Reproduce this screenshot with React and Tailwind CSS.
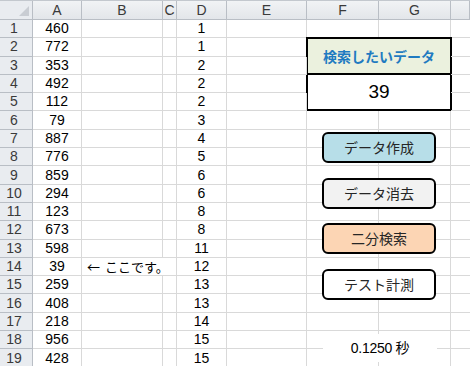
import React from 'react'

const colA = [460, 772, 353, 492, 112, 79, 887, 776, 859, 294, 123, 673, 598, 39, 259, 408, 218, 956, 428]
const colD = [1, 1, 2, 2, 2, 3, 4, 5, 6, 6, 8, 8, 11, 12, 13, 13, 14, 15, 15]
const letters = ['A', 'B', 'C', 'D', 'E', 'F', 'G', '']

const buttons = [
  { label: 'データ作成', top: 'top-[132px]', bg: 'bg-[#b7dee8]' },
  { label: 'データ消去', top: 'top-[178px]', bg: 'bg-[#f2f2f2]' },
  { label: '二分検索', top: 'top-[223px]', bg: 'bg-[#fcd5b4]' },
  { label: 'テスト計測', top: 'top-[269px]', bg: 'bg-white' },
]

const font = { fontFamily: '"Liberation Sans", "Noto Sans CJK JP", sans-serif' }
const jp = { fontFamily: '"Noto Sans CJK JP", sans-serif' }

const App = () => {
  return (
    <div className="relative w-[470px] h-[366px] overflow-hidden bg-white text-black" style={font}>
      <div className="grid grid-cols-[33px_49px_81px_14px_50px_80px_72px_72px_1fr] grid-rows-[19px_repeat(19,18.3px)] border-t border-[#c3c8ce]">
        {/* corner */}
        <div className="relative bg-[#e9ecf0] border-r border-b border-[#b9bec5]">
          <svg className="absolute right-[3px] bottom-[3px]" width="10" height="10" viewBox="0 0 10 10">
            <polygon points="10,0 10,10 0,10" fill="#c9cdd3" />
          </svg>
        </div>
        {letters.map((l, i) => (
          <div
            key={i}
            className="flex items-center justify-center bg-gradient-to-b from-[#f1f3f5] to-[#e3e6ea] border-r border-b border-[#b9bec5] text-[14px] text-[#3a3a3a]"
          >
            {l}
          </div>
        ))}
        {colA.map((a, r) => (
          <React.Fragment key={r}>
            <div className="flex items-center justify-center pr-[4px] bg-[#e9ecf0] border-r border-b border-[#b9bec5] text-[14px] text-[#3a3a3a]">
              {r + 1}
            </div>
            <div className="flex items-center justify-center border-r border-b border-[#d9d9d9] text-[14px]">{a}</div>
            <div className={`relative flex items-center border-b border-[#d9d9d9] ${r === 13 ? '' : 'border-r'}`}>
              {r === 13 && (
                <span className="absolute left-[5px] whitespace-nowrap text-[13px]" style={jp}>
                  <span className="mr-[5px]">←</span>ここです。
                </span>
              )}
            </div>
            <div className="border-r border-b border-[#d9d9d9]" />
            <div className="flex items-center justify-center border-r border-b border-[#d9d9d9] text-[14px]">{colD[r]}</div>
            <div className="border-r border-b border-[#d9d9d9]" />
            {r === 1 && (
              <div
                className="col-span-2 row-span-2 -ml-px -mt-px -mr-px flex items-center justify-center border-2 border-black bg-[#ebf1de] text-[14px] font-bold text-[#1f7bc1]"
                style={jp}
              >
                検索したいデータ
              </div>
            )}
            {r === 3 && (
              <div className="col-span-2 row-span-2 -ml-px -mr-px flex items-center justify-center border-2 border-t-0 border-black bg-white text-[19px]">
                39
              </div>
            )}
            {r !== 1 && r !== 2 && r !== 3 && r !== 4 && (
              <>
                <div className="border-r border-b border-[#d9d9d9]" />
                <div className="border-r border-b border-[#d9d9d9]" />
              </>
            )}
            <div className="border-b border-[#d9d9d9]" />
          </React.Fragment>
        ))}
      </div>

      {buttons.map((b) => (
        <div
          key={b.label}
          className={`absolute left-[322px] ${b.top} w-[114px] h-[31px] flex items-center justify-center rounded-[6px] border-2 border-black ${b.bg} text-[14px] text-[#262626]`}
          style={jp}
        >
          {b.label}
        </div>
      ))}

      <div className="absolute left-[323px] top-[334px] w-[114px] h-[28px] flex items-center justify-center bg-white text-[14px] tracking-[-0.3px]">
        0.1250 秒
      </div>
    </div>
  )
}

export default App
